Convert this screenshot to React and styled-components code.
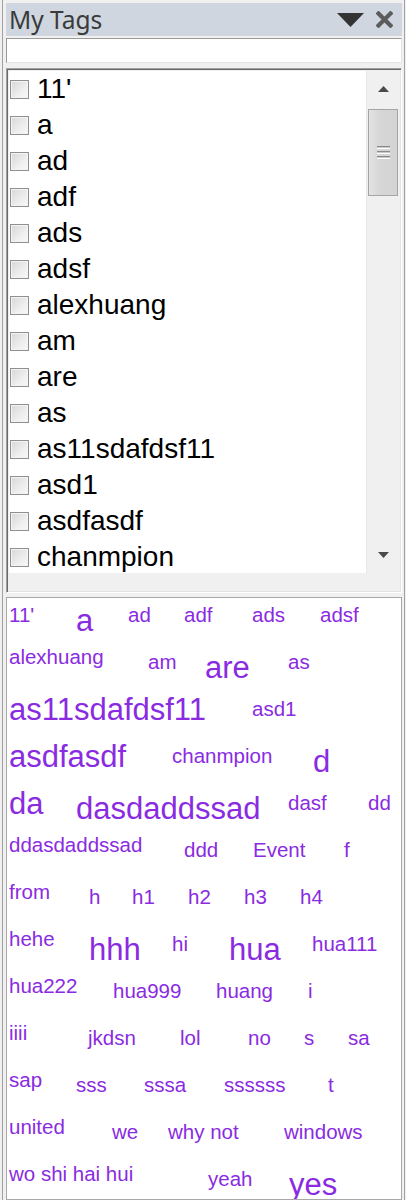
import React from 'react';
import styled, { createGlobalStyle } from 'styled-components';

const GlobalStyle = createGlobalStyle`
  html, body {
    margin: 0;
    padding: 0;
    background: #f0f0f0;
  }
  body {
    font-family: "Liberation Sans", Arial, sans-serif;
  }
`;

const Window = styled.div`
  width: 406px;
  height: 1200px;
  box-sizing: border-box;
  padding: 0 1px 0 2px;
  overflow: hidden;
`;

const Frame = styled.div`
  height: 100%;
  box-sizing: border-box;
  border-left: 1px solid #a0a0a0;
  border-right: 1px solid #a0a0a0;
  padding: 3px 2px 0 3px;
  display: flex;
  flex-direction: column;
`;

const TitleBar = styled.div`
  height: 33px;
  flex: none;
  display: flex;
  align-items: center;
  gap: 12px;
  padding: 0 9px 0 3px;
  background: #cfd6df;
`;

const Title = styled.div`
  flex: 1;
  font-family: "Noto Sans", "Open Sans", sans-serif;
  font-size: 24.5px;
  line-height: 33px;
  color: #3a3a3a;
`;

const IconButton = styled.span`
  display: flex;
  align-items: center;
  color: ${(p) => p.$color};
`;

const SearchBox = styled.input`
  flex: none;
  margin-top: 2px;
  height: 25px;
  box-sizing: border-box;
  border: 1px solid;
  border-color: #9a9a9a #e3e3e3 #e3e3e3 #9a9a9a;
  background: #fff;
  padding: 0 4px;
  outline: none;
  font-family: "Liberation Sans", Arial, sans-serif;
  font-size: 14px;
`;

const ListBox = styled.div`
  flex: none;
  margin-top: 5px;
  height: 525px;
  box-sizing: border-box;
  border: 1px solid;
  border-color: #a0a0a0 #ffffff #ffffff #a0a0a0;
  box-shadow: inset 1px 1px 0 #696969, inset -1px -1px 0 #e3e3e3;
  padding: 2px;
  display: flex;
  flex-direction: column;
`;

const ListView = styled.div`
  height: 502px;
  display: flex;
  background: #fff;
  overflow: hidden;
`;

const Items = styled.div`
  flex: 1;
  overflow: hidden;
`;

const Item = styled.label`
  height: 36px;
  display: flex;
  align-items: center;
  gap: 8px;
  padding-left: 1px;
  font-size: 28px;
  line-height: 36px;
  color: #000;
  white-space: nowrap;
`;

const Check = styled.span`
  width: 19px;
  height: 19px;
  flex: none;
  box-sizing: border-box;
  border: 1px solid #8e8f8f;
  background: linear-gradient(135deg, #d6d6d6 0%, #eeeeee 60%, #f8f8f8 100%);
  box-shadow: inset 0 0 0 1px #f4f4f4;
`;

const ScrollBar = styled.div`
  width: 32px;
  flex: none;
  display: flex;
  flex-direction: column;
  background: #f0f0f0;
  border-left: 1px solid #e8e8e8;
`;

const ScrollArrow = styled.div`
  height: ${(p) => p.$h}px;
  flex: none;
  display: flex;
  align-items: center;
  justify-content: center;
`;

const Track = styled.div`
  flex: 1;
  display: flex;
  flex-direction: column;
  padding: 0 1px;
`;

const Thumb = styled.div`
  height: 87px;
  margin-top: 2px;
  box-sizing: border-box;
  border: 1px solid #a5a5a5;
  background: linear-gradient(90deg, #e3e3e3 0%, #d6d6d6 40%, #d4d4d4 100%);
  display: flex;
  align-items: center;
  justify-content: center;
`;

const Grip = styled.div`
  width: 13px;
  display: flex;
  flex-direction: column;
  gap: 2px;
  span {
    height: 3px;
    box-sizing: border-box;
    border-top: 1px solid #8a8a8a;
    border-bottom: 1px solid #ffffff;
    background: #c8c8c8;
  }
`;

const Spacer = styled.div`
  flex: 1;
  background: #f0f0f0;
`;

const Cloud = styled.div`
  flex: 1;
  margin-top: 4px;
  box-sizing: border-box;
  border: 1px solid #a8a8a8;
  background: #fff;
  padding: 0 0 0 2px;
  overflow: hidden;
`;

const CloudRow = styled.div`
  height: 47px;
  display: flex;
  align-items: flex-start;
  ${(p) => p.$lift && '& > :first-child { margin-top: 0; }'}
`;

const Tag = styled.span`
  flex: none;
  margin-top: 5px;
  font-size: ${(p) => (p.$big ? 31 : 20.5)}px;
  color: #8a2be2;
  white-space: nowrap;
  cursor: pointer;
`;

const listItems = [
  "11'", 'a', 'ad', 'adf', 'ads', 'adsf', 'alexhuang', 'am', 'are', 'as',
  'as11sdafdsf11', 'asd1', 'asdfasdf', 'chanmpion',
];

// [text, big, cell width]
const cloudRows = [
  [["11'", 0, 67], ['a', 1, 52], ['ad', 0, 56], ['adf', 0, 68], ['ads', 0, 68], ['adsf', 0]],
  [['alexhuang', 0, 139], ['am', 0, 57], ['are', 1, 83], ['as', 0]],
  [['as11sdafdsf11', 1, 243], ['asd1', 0]],
  [['asdfasdf', 1, 163], ['chanmpion', 0, 141], ['d', 1]],
  [['da', 1, 67], ['dasdaddssad', 1, 212], ['dasf', 0, 80], ['dd', 0]],
  [['ddasdaddssad', 0, 175], ['ddd', 0, 69], ['Event', 0, 91], ['f', 0]],
  [['from', 0, 80], ['h', 0, 43], ['h1', 0, 56], ['h2', 0, 56], ['h3', 0, 56], ['h4', 0]],
  [['hehe', 0, 80], ['hhh', 1, 83], ['hi', 0, 57], ['hua', 1, 83], ['hua111', 0]],
  [['hua222', 0, 104], ['hua999', 0, 103], ['huang', 0, 92], ['i', 0]],
  [['iiii', 0, 79], ['jkdsn', 0, 92], ['lol', 0, 68], ['no', 0, 56], ['s', 0, 44], ['sa', 0]],
  [['sap', 0, 67], ['sss', 0, 68], ['sssa', 0, 80], ['ssssss', 0, 104], ['t', 0]],
  [['united', 0, 103], ['we', 0, 56], ['why not', 0, 116], ['windows', 0]],
  [['wo shi hai hui', 0, 199], ['yeah', 0, 81], ['yes', 1]],
];

export default function App() {
  return (
    <>
      <GlobalStyle />
      <Window>
        <Frame>
          <TitleBar>
            <Title>My Tags</Title>
            <IconButton $color="#333">
              <svg width="27" height="14" viewBox="0 0 27 14">
                <polygon points="0,0 27,0 13.5,14" fill="currentColor" />
              </svg>
            </IconButton>
            <IconButton $color="#5c5c5c">
              <svg width="17" height="17" viewBox="0 0 17 17">
                <path d="M2.5 2.5 L14.5 14.5 M14.5 2.5 L2.5 14.5" stroke="currentColor" strokeWidth="4.2" strokeLinecap="square" />
              </svg>
            </IconButton>
          </TitleBar>

          <SearchBox type="text" aria-label="Filter tags" />

          <ListBox>
            <ListView>
              <Items>
                {listItems.map((t) => (
                  <Item key={t}>
                    <Check />
                    {t}
                  </Item>
                ))}
              </Items>
              <ScrollBar>
                <ScrollArrow $h={36}>
                  <svg width="11" height="6" viewBox="0 0 11 6">
                    <polygon points="5.5,0 11,6 0,6" fill="#4a4a4a" />
                  </svg>
                </ScrollArrow>
                <Track>
                  <Thumb>
                    <Grip>
                      <span />
                      <span />
                      <span />
                    </Grip>
                  </Thumb>
                </Track>
                <ScrollArrow $h={36}>
                  <svg width="11" height="6" viewBox="0 0 11 6">
                    <polygon points="0,0 11,0 5.5,6" fill="#4a4a4a" />
                  </svg>
                </ScrollArrow>
              </ScrollBar>
            </ListView>
            <Spacer />
          </ListBox>

          <Cloud>
            {cloudRows.map((row, i) => (
              <CloudRow key={i} $lift={i > 0}>
                {row.map(([text, big, w]) => (
                  <Tag key={text} $big={!!big} style={w ? { width: w } : undefined}>
                    {text}
                  </Tag>
                ))}
              </CloudRow>
            ))}
          </Cloud>
        </Frame>
      </Window>
    </>
  );
}
